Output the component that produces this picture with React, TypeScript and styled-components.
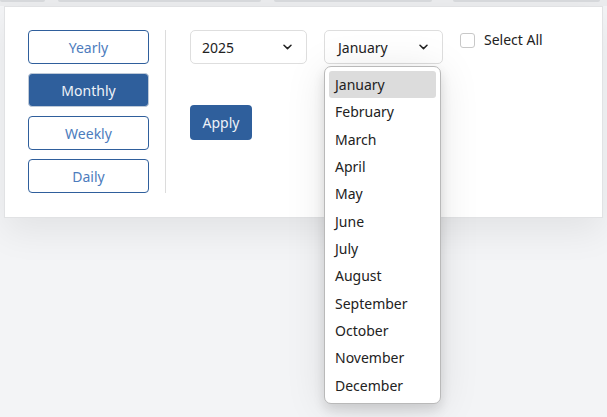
import React, { useState } from "react";
import styled, { createGlobalStyle } from "styled-components";

const Global = createGlobalStyle`
  html, body { margin: 0; padding: 0; background: #f3f4f6; }
  body { font-family: "Noto Sans", "Lato", sans-serif; }
  * { box-sizing: border-box; }
`;

const Page = styled.div`
  position: relative;
  width: 607px;
  height: 417px;
  overflow: hidden;
  background: #f3f4f6;
`;

const BackBar = styled.div`
  display: flex;
  gap: 13px;
  padding: 0 7px 0 0;
  height: 6px;
  background: #ebecee;
`;

const BackTab = styled.div<{ $w: number; $ml?: number }>`
  width: ${(p) => p.$w}px;
  margin-left: ${(p) => p.$ml ?? 0}px;
  height: 2px;
  background: #d6d8db;
  border-radius: 0 0 2px 2px;
`;

const Wrap = styled.div`
  padding: 0 4px;
`;

const Panel = styled.div`
  display: flex;
  align-items: stretch;
  background: #fff;
  border: 1px solid #e1e2e4;
  padding: 23px 24px 24px 23px;
  box-shadow: 0 14px 34px rgba(0, 0, 0, 0.07);
`;

const PeriodColumn = styled.div`
  display: flex;
  flex-direction: column;
  gap: 9px;
  width: 121px;
`;

const PeriodButton = styled.button<{ $active?: boolean }>`
  height: 34px;
  width: 121px;
  border-radius: 4px;
  border: 1px solid ${(p) => (p.$active ? "#bfcad8" : "#2f5f9c")};
  background: ${(p) => (p.$active ? "#2f5f9c" : "#fff")};
  color: ${(p) => (p.$active ? "#eef2f8" : "#4d7cbd")};
  font-family: "Noto Sans", sans-serif;
  font-size: 14px;
  padding: 0;
  cursor: pointer;
`;

const Divider = styled.div`
  width: 1px;
  background: #dcdcdc;
  margin: 0 24px 0 16px;
`;

const Content = styled.div`
  display: flex;
  flex-direction: column;
  gap: 41px;
`;

const Row = styled.div`
  display: flex;
  align-items: flex-start;
  gap: 17px;
`;

const SelectBox = styled.div<{ $w: number }>`
  position: relative;
  width: ${(p) => p.$w}px;
  height: 34px;
  border: 1px solid #dedede;
  border-radius: 5px;
  display: flex;
  align-items: center;
  justify-content: space-between;
  padding: 0 14px 0 11px;
  font-size: 14px;
  color: #222;
  background: #fff;
`;

const SelectLabel = styled.span<{ $pl?: number }>`
  padding-left: ${(p) => p.$pl ?? 0}px;
`;

const Dropdown = styled.ul`
  position: absolute;
  top: 35px;
  left: -1px;
  width: 117px;
  margin: 0;
  padding: 4px;
  list-style: none;
  background: #fff;
  border: 1px solid #b9b9b9;
  border-radius: 7px;
  box-shadow: 0 6px 12px rgba(0, 0, 0, 0.12), 0 4px 40px rgba(0, 0, 0, 0.1);
  z-index: 5;
`;

const Option = styled.li<{ $selected?: boolean }>`
  height: 27.33px;
  line-height: 27.33px;
  padding-left: 6px;
  border-radius: 3px;
  font-size: 14px;
  color: #222;
  background: ${(p) => (p.$selected ? "#dcdcdc" : "transparent")};
`;

const CheckRow = styled.label`
  display: flex;
  align-items: flex-start;
  gap: 9px;
  padding-top: 3px;
  font-size: 14px;
  color: #222;
`;

const CheckBox = styled.span`
  width: 15px;
  height: 15px;
  border: 1px solid #c8c8c8;
  border-radius: 3px;
  background: #fff;
`;

const CheckText = styled.span`
  margin-top: -3px;
`;

const ApplyButton = styled.button`
  width: 62px;
  height: 35px;
  border: none;
  border-radius: 4px;
  background: #2f5f9c;
  color: #eef2f8;
  font-family: "Noto Sans", sans-serif;
  font-size: 14px;
  padding: 0;
`;

const Chevron = () => (
  <svg width="9" height="6" viewBox="0 0 9 6" fill="none">
    <path d="M1 1.2 L4.5 4.6 L8 1.2" stroke="#222" strokeWidth="1.5" strokeLinecap="round" strokeLinejoin="round" />
  </svg>
);

const months = [
  "January", "February", "March", "April", "May", "June",
  "July", "August", "September", "October", "November", "December",
];

export default function App() {
  const [period, setPeriod] = useState("Monthly");
  return (
    <Page>
      <Global />
      <BackBar>
        <BackTab $w={45} />
        <BackTab $w={203} />
        <BackTab $w={158} />
        <BackTab $w={147} $ml={8} />
      </BackBar>
      <Wrap>
        <Panel>
          <PeriodColumn>
            {["Yearly", "Monthly", "Weekly", "Daily"].map((p) => (
              <PeriodButton key={p} $active={period === p} onClick={() => setPeriod(p)}>
                {p}
              </PeriodButton>
            ))}
          </PeriodColumn>
          <Divider />
          <Content>
            <Row>
              <SelectBox $w={117}>
                <SelectLabel>2025</SelectLabel>
                <Chevron />
              </SelectBox>
              <SelectBox $w={119}>
                <SelectLabel $pl={2}>January</SelectLabel>
                <Chevron />
                <Dropdown>
                  {months.map((m) => (
                    <Option key={m} $selected={m === "January"}>
                      {m}
                    </Option>
                  ))}
                </Dropdown>
              </SelectBox>
              <CheckRow>
                <CheckBox />
                <CheckText>Select All</CheckText>
              </CheckRow>
            </Row>
            <Row>
              <ApplyButton>Apply</ApplyButton>
            </Row>
          </Content>
        </Panel>
      </Wrap>
    </Page>
  );
}
